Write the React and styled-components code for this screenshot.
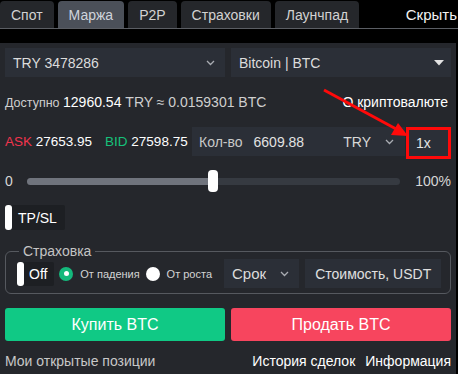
import React from 'react';
import styled, { createGlobalStyle } from 'styled-components';

const Global = createGlobalStyle`
  html, body {
    margin: 0;
    padding: 0;
    background: #000;
  }
  body {
    font-family: "Liberation Sans", Arial, sans-serif;
    overflow: hidden;
  }
`;

const Page = styled.div`
  width: 458px;
  height: 374px;
  background: #000;
  color: #ddd;
  overflow: hidden;
`;

const TabBar = styled.div`
  display: flex;
  align-items: flex-end;
  height: 28px;
  gap: 4px;
  border-bottom: 1px solid #5b5e64;
`;

const Tab = styled.div`
  height: 27px;
  box-sizing: border-box;
  padding: 0 11px;
  display: flex;
  align-items: center;
  font-size: 14px;
  border-radius: 4px 4px 0 0;
  background: ${p => (p.$active ? '#4b5059' : '#25272b')};
  color: ${p => (p.$active ? '#cfd4dc' : '#d2d2d2')};
`;

const HideLink = styled.div`
  margin-left: auto;
  margin-right: 1px;
  align-self: center;
  font-size: 15px;
  color: #f2f2f2;
  white-space: nowrap;
`;

const Panel = styled.div`
  position: relative;
  margin-top: 14px;
  width: 456px;
  height: 331px;
  box-sizing: border-box;
  padding: 5px 5px 0;
  background: #25272c;
`;

const SelectRow = styled.div`
  display: grid;
  grid-template-columns: 220px 220px;
  gap: 6px;
`;

const Select = styled.div`
  height: 29px;
  display: flex;
  align-items: center;
  justify-content: space-between;
  padding: 0 ${p => p.$right || 10}px 0 ${p => p.$left || 8}px;
  background: #2b2f37;
  color: #dcdcdc;
  font-size: ${p => p.$size || 14}px;
`;

const InfoRow = styled.div`
  height: 50px;
  display: flex;
  align-items: center;
  justify-content: space-between;
  font-size: 14px;
  color: #cfcfcf;
`;

const Muted = styled.span`
  font-size: 12.5px;
  color: #cfcfcf;
`;

const Bright = styled.span`
  color: #fff;
`;

const AboutLink = styled.span`
  color: #fff;
  margin-right: 3px;
`;

const QuoteRow = styled.div`
  display: flex;
  align-items: flex-start;
  height: 32px;
  font-size: 13.5px;
`;

const Quote = styled.div`
  align-self: center;
  margin-right: ${p => p.$gap || 0}px;
  color: #fff;
  white-space: nowrap;
  margin-top: -3px;
`;

const Tag = styled.span`
  color: ${p => p.$color};
`;

const AmountBox = styled.div`
  width: 213px;
  height: 29px;
  box-sizing: border-box;
  display: flex;
  align-items: center;
  padding: 0 11px 0 7px;
  background: #2b2f37;
  font-size: 14px;
  margin-left: auto;
`;

const AmountLabel = styled.span`
  color: #c9c9c9;
  margin-right: 11px;
`;

const AmountValue = styled.span`
  flex: 1;
  color: #e2e2e2;
`;

const Currency = styled.span`
  color: #d8d8d8;
  margin-right: 14px;
`;

const LeverageBox = styled.div`
  width: 45px;
  height: 32px;
  box-sizing: border-box;
  margin-left: 1px;
  display: flex;
  align-items: center;
  padding-left: 7px;
  border: 3px solid #ff0a0a;
  background: #2b2f37;
  color: #e4e4e4;
  font-size: 14px;
`;

const SliderRow = styled.div`
  display: flex;
  align-items: center;
  height: 22px;
  margin-top: 11px;
  font-size: 14px;
  color: #d6d6d6;
`;

const Track = styled.div`
  position: relative;
  margin-left: 14px;
  width: 373px;
  height: 7px;
  border-radius: 4px;
  background: #363a41;
`;

const TrackFill = styled.div`
  height: 100%;
  border-radius: 4px;
  background: #70747d;
`;

const Thumb = styled.div`
  position: absolute;
  top: -8px;
  width: 10px;
  height: 22px;
  margin-left: -5px;
  border-radius: 4px;
  background: #fff;
`;

const SliderEnd = styled.span`
  margin-left: auto;
`;

const Toggle = styled.div`
  display: inline-flex;
  align-items: center;
  height: ${p => p.$h || 25}px;
  margin-top: ${p => p.$top || 0}px;
  padding-right: ${p => p.$pr || 8}px;
  background: #1d1f23;
  border-radius: 2px;
  color: #fff;
  font-size: 14px;
  &::before {
    content: '';
    width: 7px;
    height: 100%;
    margin-right: ${p => p.$gap || 5}px;
    border-radius: 3px;
    background: #fff;
  }
`;

const Fieldset = styled.fieldset`
  margin: 10px 0 0;
  padding: 1px 9px 5px 11px;
  width: 446px;
  box-sizing: border-box;
  border: 1px solid #56595f;
  border-radius: 6px;
  min-inline-size: 0;
`;

const Legend = styled.legend`
  padding: 0 4px;
  margin-left: 2px;
  font-size: 14px;
  line-height: 14px;
  color: #c4c4c4;
`;

const InsuranceRow = styled.div`
  display: flex;
  align-items: center;
  height: 29px;
`;

const Radio = styled.span`
  width: 14px;
  height: 14px;
  box-sizing: border-box;
  border-radius: 50%;
  margin: 0 ${p => p.$after}px 0 ${p => p.$before}px;
  background: ${p => (p.$checked ? '#14b97c' : '#fff')};
  display: flex;
  align-items: center;
  justify-content: center;
  &::after {
    content: '';
    display: ${p => (p.$checked ? 'block' : 'none')};
    width: 5px;
    height: 5px;
    border-radius: 50%;
    background: #fff;
  }
`;

const RadioLabel = styled.span`
  font-size: 11px;
  color: #d4d4d4;
  white-space: nowrap;
`;

const TermSelect = styled.div`
  width: 76px;
  height: 29px;
  box-sizing: border-box;
  margin-left: 12px;
  padding: 0 10px 0 8px;
  display: flex;
  align-items: center;
  justify-content: space-between;
  background: #2b2f37;
  color: #dcdcdc;
  font-size: 15px;
`;

const CostBox = styled.div`
  width: 137px;
  height: 29px;
  margin-left: 6px;
  display: flex;
  align-items: center;
  justify-content: center;
  background: #2b2f37;
  color: #e0e0e0;
  font-size: 14px;
`;

const ButtonRow = styled.div`
  display: grid;
  grid-template-columns: 220px 220px;
  gap: 6px;
  margin-top: 14px;
`;

const TradeButton = styled.button`
  height: 33px;
  border: none;
  border-radius: 3px;
  background: ${p => p.$color};
  color: #fff;
  font-family: inherit;
  font-size: 16px;
  padding: 0;
`;

const Footer = styled.div`
  display: flex;
  align-items: center;
  height: 20px;
  margin-top: 10px;
  font-size: 14px;
`;

const FooterLink = styled.span`
  color: ${p => (p.$muted ? '#c8c8c8' : '#fff')};
  margin-left: ${p => p.$ml || '0'};
`;

const Annotation = styled.svg`
  position: absolute;
  left: 0;
  top: 0;
  pointer-events: none;
`;

function Chevron() {
  return (
    <svg width="9" height="6" viewBox="0 0 9 6">
      <polyline points="1,1 4.5,4.5 8,1" fill="none" stroke="#a9acb2" strokeWidth="1.3" />
    </svg>
  );
}

function Caret() {
  return (
    <svg width="10" height="6" viewBox="0 0 10 6">
      <polygon points="0,0 10,0 5,5.5" fill="#e2e2e2" />
    </svg>
  );
}

const tabs = ['Спот', 'Маржа', 'P2P', 'Страховки', 'Лаунчпад'];

export default function App() {
  const progress = 50;
  return (
    <Page>
      <Global />
      <TabBar>
        {tabs.map(t => (
          <Tab key={t} $active={t === 'Маржа'}>{t}</Tab>
        ))}
        <HideLink>Скрыть</HideLink>
      </TabBar>

      <Panel>
        <SelectRow>
          <Select>
            <span>TRY 3478286</span>
            <Chevron />
          </Select>
          <Select $right={7}>
            <span>Bitcoin | BTC</span>
            <Caret />
          </Select>
        </SelectRow>

        <InfoRow>
          <span>
            <Muted>Доступно </Muted>
            <Bright>12960.54</Bright> TRY ≈ 0.0159301 BTC
          </span>
          <AboutLink>О криптовалюте</AboutLink>
        </InfoRow>

        <QuoteRow>
          <Quote $gap={13}>
            <Tag $color="#f0344c">ASK</Tag> 27653.95
          </Quote>
          <Quote>
            <Tag $color="#16c07a">BID</Tag> 27598.75
          </Quote>
          <AmountBox>
            <AmountLabel>Кол-во</AmountLabel>
            <AmountValue>6609.88</AmountValue>
            <Currency>TRY</Currency>
            <Chevron />
          </AmountBox>
          <LeverageBox>1x</LeverageBox>
        </QuoteRow>

        <SliderRow>
          <span>0</span>
          <Track>
            <TrackFill style={{ width: `${progress}%` }} />
            <Thumb style={{ left: `${progress}%` }} />
          </Track>
          <SliderEnd>100%</SliderEnd>
        </SliderRow>

        <Toggle $top={13} $gap={6}>TP/SL</Toggle>

        <Fieldset>
          <Legend>Страховка</Legend>
          <InsuranceRow>
            <Toggle $h={24} $gap={5} $pr={7}>Off</Toggle>
            <Radio $checked $before={5} $after={7} />
            <RadioLabel>От падения</RadioLabel>
            <Radio $before={6} $after={7} />
            <RadioLabel>От роста</RadioLabel>
            <TermSelect>
              <span>Срок</span>
              <Chevron />
            </TermSelect>
            <CostBox>Стоимость, USDT</CostBox>
          </InsuranceRow>
        </Fieldset>

        <ButtonRow>
          <TradeButton $color="#10c985">Купить BTC</TradeButton>
          <TradeButton $color="#f7455e">Продать BTC</TradeButton>
        </ButtonRow>

        <Footer>
          <FooterLink $muted>Мои открытые позиции</FooterLink>
          <FooterLink $ml="auto">История сделок</FooterLink>
          <FooterLink $ml="10px">Информация</FooterLink>
        </Footer>

        <Annotation width="456" height="120" viewBox="0 0 456 120">
          <line x1="324" y1="47" x2="398" y2="87" stroke="#ff0a0a" strokeWidth="3" />
          <polygon points="408,93 391,92 398,80" fill="#ff0a0a" />
        </Annotation>
      </Panel>
    </Page>
  );
}
